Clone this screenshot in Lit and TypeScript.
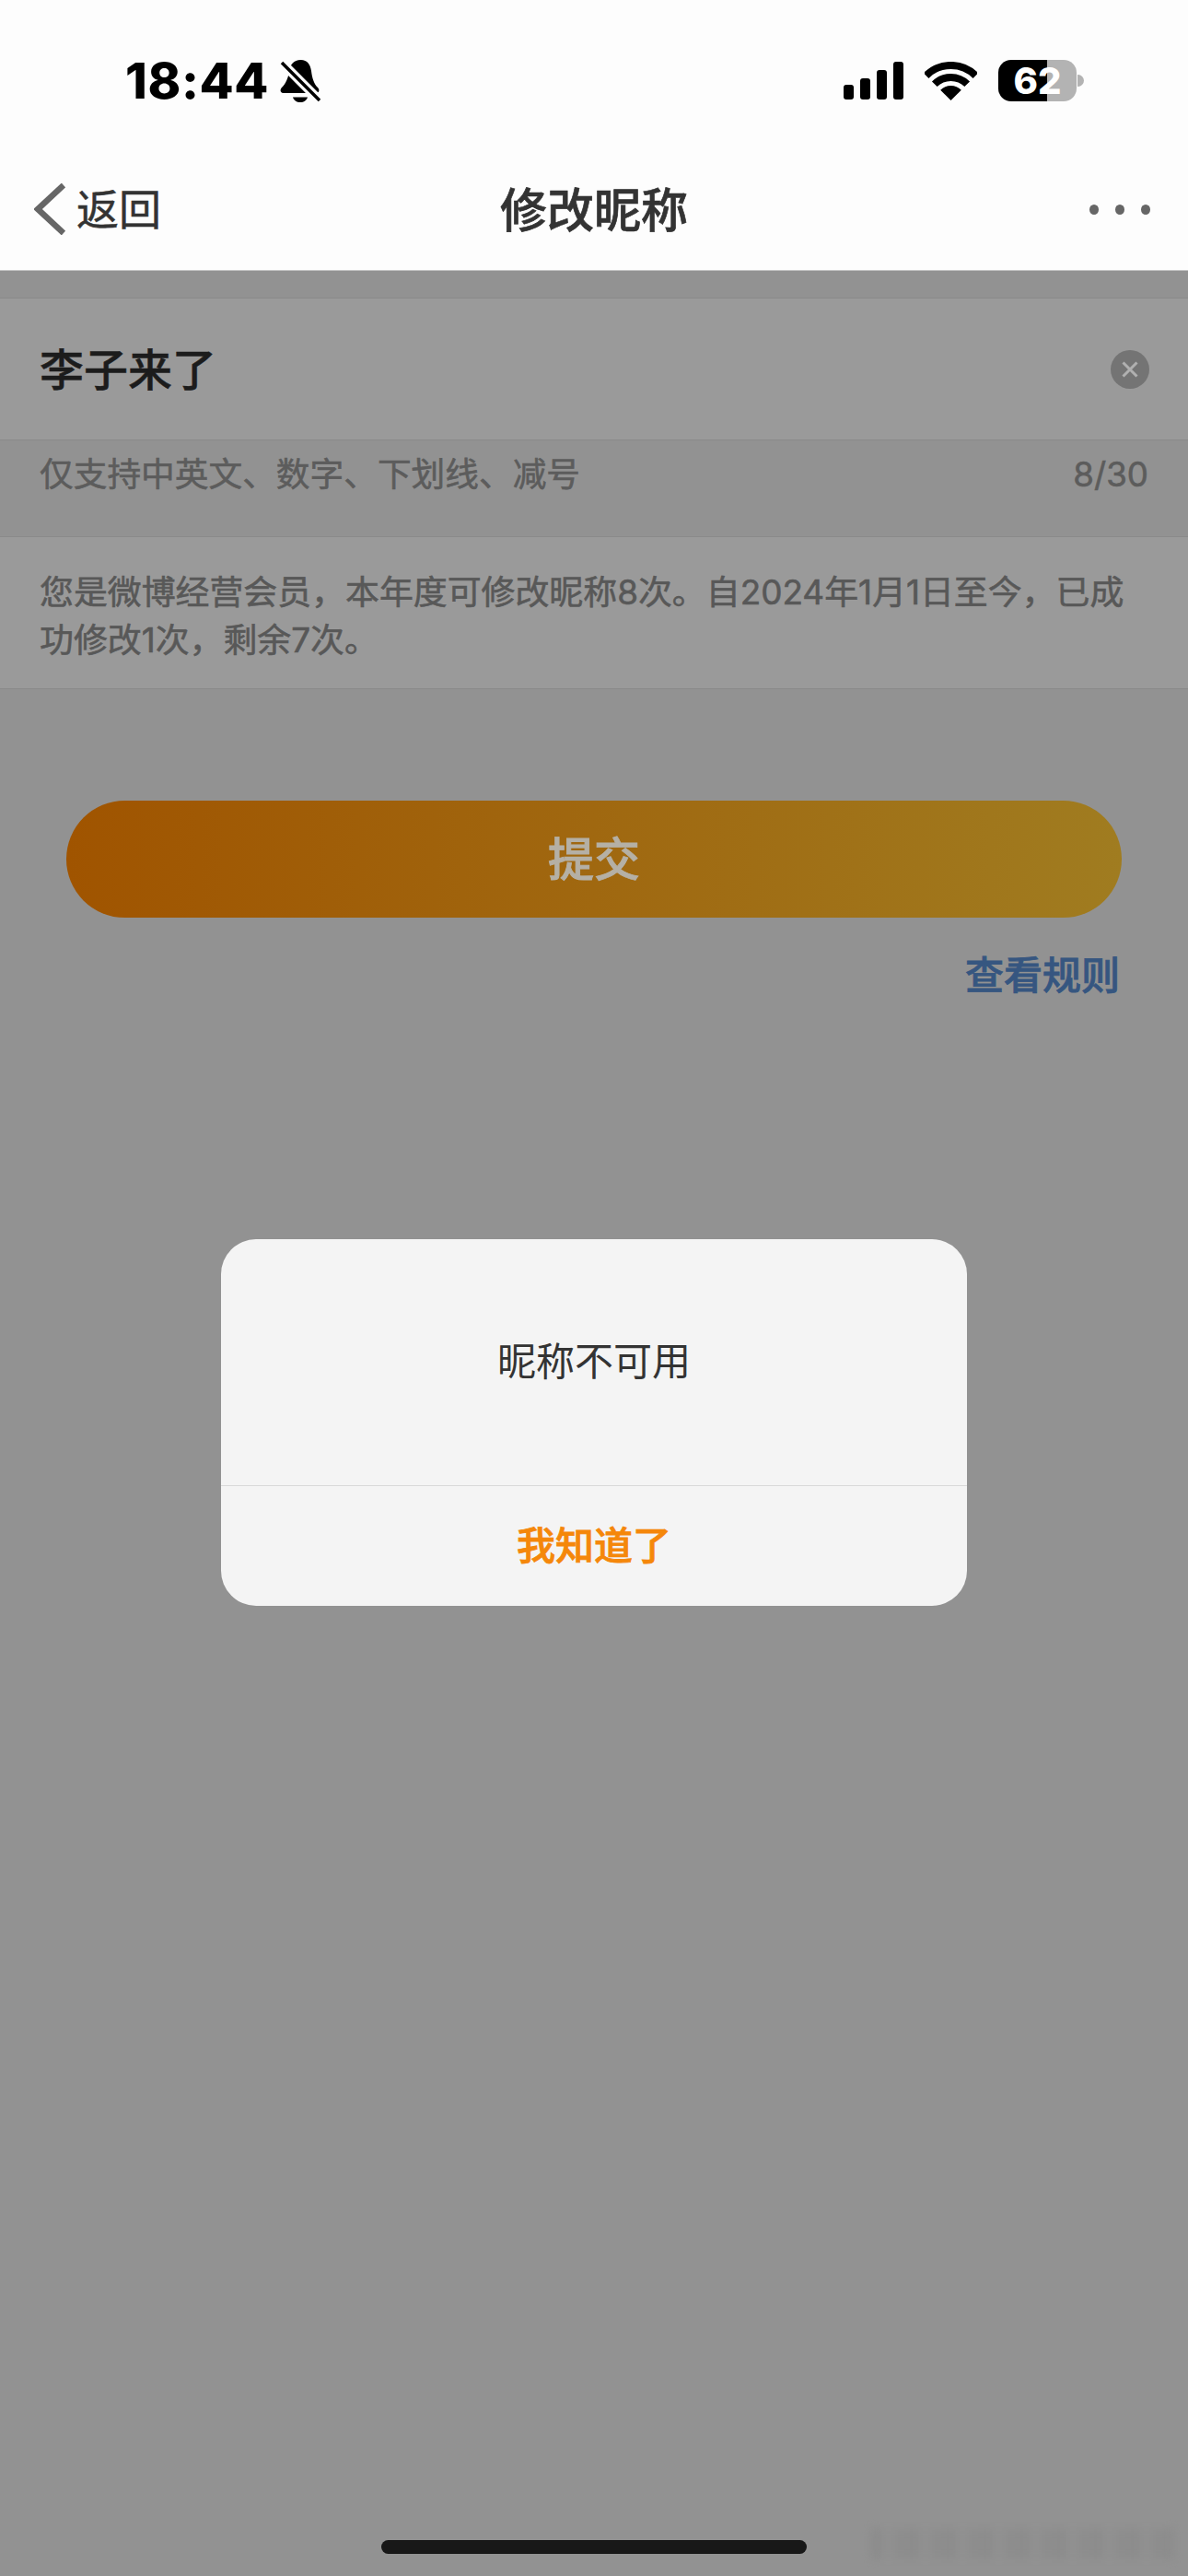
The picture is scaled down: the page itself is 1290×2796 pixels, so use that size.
import { LitElement, html, css } from 'lit';
import { customElement } from 'lit/decorators.js';

@customElement('app-root')
export class AppRoot extends LitElement {
  static styles = css`
    :host {
      display: block;
      position: relative;
      width: 1290px;
      height: 2796px;
      overflow: hidden;
      background: #929292;
      font-family: Inter, 'Noto Sans CJK SC', sans-serif;
    }

    /* header */
    .header {
      height: 294px;
      box-sizing: border-box;
      background: #fdfdfd;
      border-bottom: 1px solid #c4c4c4;
    }
    .status {
      height: 175px;
      display: flex;
      align-items: center;
      justify-content: space-between;
      padding: 0 113px 0 136px;
    }
    .status-left,
    .status-right {
      display: flex;
      align-items: center;
    }
    .time {
      font-size: 54px;
      font-weight: 800;
      line-height: 1;
      color: #000;
      letter-spacing: 0.6px;
    }
    .bell {
      width: 44px;
      height: 46px;
      margin-left: 12px;
    }
    .signal {
      width: 66px;
      height: 41px;
    }
    .wifi {
      width: 57px;
      height: 42px;
      margin-left: 22px;
    }
    .battery {
      width: 85px;
      height: 45px;
      margin-left: 23px;
      border-radius: 14px;
      background: linear-gradient(90deg, #000 62.5%, #b3b3b3 62.5%);
      color: #fff;
      font-size: 40px;
      font-weight: 800;
      line-height: 45px;
      text-align: center;
    }
    .nub {
      width: 7px;
      height: 13px;
      margin-left: 1px;
      border-radius: 0 7px 7px 0;
      background: #b3b3b3;
    }
    .nav {
      height: 104px;
      display: grid;
      grid-template-columns: 1fr auto 1fr;
      align-items: center;
    }
    .back {
      display: flex;
      align-items: center;
      gap: 12px;
      padding-left: 37px;
      font-size: 46px;
      line-height: 60px;
      color: #333;
      -webkit-text-stroke: 0.5px #333;
    }
    .back svg {
      width: 34px;
      height: 56px;
    }
    .title {
      font-size: 51px;
      font-weight: 500;
      line-height: 60px;
      padding-top: 3px;
      color: #333;
      -webkit-text-stroke: 0.7px #333;
    }
    .more {
      display: flex;
      justify-content: flex-end;
      gap: 18px;
      padding-right: 41px;
    }
    .more span {
      width: 10px;
      height: 11px;
      border-radius: 50%;
      background: #666;
    }

    /* form */
    .form {
      padding-top: 29px;
    }
    .input-row {
      height: 153px;
      display: flex;
      align-items: center;
      justify-content: space-between;
      padding: 0 42px 0 43px;
      background: #9a9a9a;
      border-top: 1px solid #8a8a8a;
      border-bottom: 1px solid #8a8a8a;
    }
    .name {
      font-size: 48px;
      font-weight: 500;
      line-height: 60px;
      padding-top: 3px;
      color: #1c1c1c;
      -webkit-text-stroke: 0.5px #1c1c1c;
    }
    .clear {
      width: 42px;
      height: 42px;
    }
    .hint-row {
      height: 104px;
      box-sizing: border-box;
      display: flex;
      justify-content: space-between;
      padding: 10px 43px 0 43px;
      font-size: 36.7px;
      line-height: 54px;
      color: #5c5c5c;
      -webkit-text-stroke: 0.6px #5c5c5c;
    }
    .notice {
      box-sizing: border-box;
      height: 166px;
      padding: 34px 50px 0 43px;
      background: #9a9a9a;
      border-top: 1px solid #8a8a8a;
      border-bottom: 1px solid #8a8a8a;
      font-size: 36.9px;
      line-height: 52px;
      color: #585858;
      -webkit-text-stroke: 0.6px #585858;
    }
    .submit {
      height: 127px;
      margin: 121px 72px 0;
      border-radius: 64px;
      background: linear-gradient(90deg, #a05400, #a07c20);
      display: flex;
      align-items: center;
      justify-content: center;
      padding-bottom: 7px;
      box-sizing: border-box;
      font-size: 50px;
      font-weight: 500;
      color: #b5b0a5;
      -webkit-text-stroke: 0.9px #b5b0a5;
    }
    .rules {
      margin-top: 35px;
      padding-right: 74px;
      text-align: right;
      font-size: 42px;
      font-weight: 500;
      line-height: 56px;
      color: #365680;
      -webkit-text-stroke: 0.8px #365680;
    }

    /* dialog sits over the dimmed page */
    .dialog {
      position: absolute;
      left: 240px;
      top: 1345px;
      width: 810px;
      height: 398px;
      display: flex;
      flex-direction: column;
      border-radius: 38px;
      background: #f4f4f4;
    }
    .message {
      height: 268px;
      box-sizing: border-box;
      padding-bottom: 9px;
      display: flex;
      align-items: center;
      justify-content: center;
      font-size: 42px;
      color: #333;
      border-bottom: 1px solid #d9d9d9;
    }
    .confirm {
      flex: 1;
      padding-bottom: 7px;
      display: flex;
      align-items: center;
      justify-content: center;
      font-size: 42px;
      font-weight: 500;
      color: #f5870a;
      -webkit-text-stroke: 0.8px #f5870a;
    }
    .home {
      position: absolute;
      left: 414px;
      top: 2757px;
      width: 462px;
      height: 15px;
      border-radius: 8px;
      background: #181818;
    }
    .watermark {
      position: absolute;
      left: 945px;
      top: 2744px;
      width: 330px;
      height: 34px;
      background: repeating-linear-gradient(90deg, #8a8a8a 0 14px, #929292 14px 24px, #8c8c8c 24px 40px);
      filter: blur(5px);
      opacity: 0.7;
    }
  `;

  render() {
    return html`
      <div class="header">
        <div class="status">
          <div class="status-left">
            <span class="time">18:44</span>
            <svg class="bell" viewBox="0 0 44 46">
              <path d="M22.5 0C30 0 33 5 34 12C35 20 37 26 41 30C43 32 43 35 40 36L3 36C0 35 0 32 2 30C6 26 9 20 10 12C11 5 15 0 22.5 0Z" fill="#000"/>
              <path d="M14 40.5H30C29 44 26 46 22 46C18 46 15 44 14 40.5Z" fill="#000"/>
              <path d="M2 3L43 44" stroke="#fdfdfd" stroke-width="10"/>
              <path d="M2 3L43 44" stroke="#000" stroke-width="3.6"/>
            </svg>
          </div>
          <div class="status-right">
            <svg class="signal" viewBox="0 0 66 41" fill="#000">
              <rect x="0" y="25" width="11" height="16" rx="3"/>
              <rect x="18" y="18" width="11" height="23" rx="3"/>
              <rect x="36" y="9" width="11" height="32" rx="3"/>
              <rect x="54" y="0" width="11" height="41" rx="3"/>
            </svg>
            <svg class="wifi" viewBox="0 0 57 42">
              <path d="M1.6 15.1A38 38 0 0 1 55.4 15.1" fill="none" stroke="#000" stroke-width="8"/>
              <path d="M10.8 24.3A25 25 0 0 1 46.2 24.3" fill="none" stroke="#000" stroke-width="8"/>
              <path d="M28.5 42L17.2 30.7A16 16 0 0 1 39.8 30.7Z" fill="#000"/>
            </svg>
            <div class="battery">62</div>
            <div class="nub"></div>
          </div>
        </div>
        <div class="nav">
          <div class="back">
            <svg viewBox="0 0 34 56" fill="none" stroke="#666" stroke-width="6.5">
              <path d="M32 2L4 28L32 54"/>
            </svg>
            <span>返回</span>
          </div>
          <div class="title">修改昵称</div>
          <div class="more"><span></span><span></span><span></span></div>
        </div>
      </div>

      <div class="form">
        <div class="input-row">
          <span class="name">李子来了</span>
          <svg class="clear" viewBox="0 0 42 42">
            <circle cx="21" cy="21" r="21" fill="#747474"/>
            <path d="M13.5 13.5L28.5 28.5M28.5 13.5L13.5 28.5" stroke="#b0b0b0" stroke-width="3"/>
          </svg>
        </div>
        <div class="hint-row">
          <span>仅支持中英文、数字、下划线、减号</span>
          <span>8/30</span>
        </div>
        <div class="notice">您是微博经营会员，本年度可修改昵称8次。自2024年1月1日至今，已成功修改1次，剩余7次。</div>
        <div class="submit">提交</div>
        <div class="rules">查看规则</div>
      </div>

      <div class="dialog">
        <div class="message">昵称不可用</div>
        <div class="confirm">我知道了</div>
      </div>

      <div class="home"></div>
      <div class="watermark"></div>
    `;
  }
}
